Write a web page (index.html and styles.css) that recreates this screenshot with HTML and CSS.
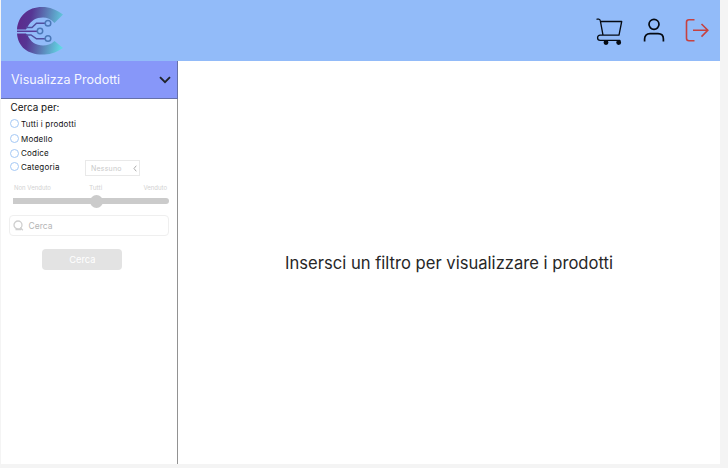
FILE: index.html
```html
<!DOCTYPE html>
<html lang="it">
<head>
<meta charset="utf-8">
<title>Prodotti</title>
<link rel="stylesheet" href="styles.css">
</head>
<body>
<div class="app">
  <header class="header">
    <svg class="logo" width="50" height="52" viewBox="0 0 50 52">
      <defs>
        <linearGradient id="brand" x1="2" y1="24" x2="48" y2="32" gradientUnits="userSpaceOnUse">
          <stop offset="0" stop-color="#5c2a8c"/>
          <stop offset=".25" stop-color="#563594"/>
          <stop offset="1" stop-color="#62d8e4"/>
        </linearGradient>
      </defs>
      <path fill="url(#brand)" d="M2 24.500C3 11 13 2 27 2c8 0 14 2.500 21 7.500L39.500 18C36 14 32 12.500 28 12.500c-7 0-12 3-15.500 9.500L11 24.500ZM2 28.500h9l1.500 1.500c3 7 8.500 10.500 15.500 10.500 4 0 8-1 11.500-4.500l8.500 7C40 48.500 34 49.500 27 49.500 13 49.500 3 42 2 28.500Z"/>
      <g fill="none" stroke="#4b78b8" stroke-width="1.500">
        <path stroke="#563c99" d="M2 26.300h20"/>
        <path stroke="#504f9f" d="M11 22.500h6l4.500-4.200H30M11 30h5l5.500 3.800H30"/>
        <circle cx="25" cy="26" r="2.700"/>
        <circle cx="33" cy="18.300" r="2.800"/>
        <circle cx="33" cy="33.500" r="2.800"/>
      </g>
    </svg>
    <nav class="actions">
      <svg width="27" height="28" viewBox="0 0 27 28" fill="none" stroke="#050a12" stroke-width="1.300" stroke-linejoin="round" stroke-linecap="round">
        <path d="M1 1.200h1.800c1 0 1.400.8 1.600 2L7 17.200M4.500 3.500h21.200L23 17.200H4.200c-3.500 0-3.500 5.200 0 5.200h19.600"/>
        <circle cx="10" cy="24.500" r="1.800" fill="#050a12"/>
        <circle cx="22.700" cy="24.500" r="1.800" fill="#050a12"/>
      </svg>
      <svg class="user" width="22" height="24" viewBox="0 0 22 24" fill="none" stroke="#050a12" stroke-width="1.700">
        <circle cx="11" cy="6.300" r="5"/>
        <path d="M1.600 23.500V21c0-3.500 2-5.300 5.400-5.300h8c3.400 0 5.400 1.800 5.400 5.300v2.500"/>
      </svg>
      <svg class="exit" width="24" height="24" viewBox="0 0 24 24" fill="none" stroke="#c64140" stroke-width="1.600">
        <path d="M9.500 1.700H4C2.300 1.700 1.500 2.500 1.500 4.200v16c0 1.700.8 2.500 2.500 2.500h5.500M8 12.300h15M16.500 6l6.300 6.300-6.300 6.300"/>
      </svg>
    </nav>
  </header>
  <div class="body">
    <aside class="sidebar">
      <div class="panel-title">
        <span>Visualizza Prodotti</span>
        <svg width="12" height="8" viewBox="0 0 12 8" fill="none" stroke="#20232b" stroke-width="1.900"><path d="M1 1.200l5 5 5-5"/></svg>
      </div>
      <form class="filters">
        <div class="legend">Cerca per:</div>
        <div class="option"><i class="dot"></i><span>Tutti i prodotti</span></div>
        <div class="option"><i class="dot"></i><span>Modello</span></div>
        <div class="option code"><i class="dot"></i><span>Codice</span></div>
        <div class="option category"><i class="dot"></i><span>Categoria</span>
          <div class="select"><span>Nessuno</span><svg width="4" height="7" viewBox="0 0 4 7" fill="none" stroke="#aaa" stroke-width="1"><path d="M3.300.7L1 3.500l2.300 2.800"/></svg></div>
        </div>
        <div class="marks"><span>Non Venduto</span><span class="mid">Tutti</span><span class="end">Venduto</span></div>
        <div class="slider"><i class="knob"></i></div>
        <div class="search">
          <svg width="11" height="11" viewBox="0 0 11 11" fill="none" stroke="#cfcfcf" stroke-width="1.300"><circle cx="5" cy="5" r="4"/><path d="M7.300 7.500l2.500 2.700M2.500 9.600h5.500"/></svg>
          <span>Cerca</span>
        </div>
        <div class="submit">Cerca</div>
      </form>
    </aside>
    <main class="content"><p>Insersci un filtro per visualizzare i prodotti</p></main>
  </div>
</div>
</body>
</html>
```
FILE: styles.css
```css
* { box-sizing: border-box; }
body {
  margin: 0;
  background: #f4f4f4;
  font-family: Inter, sans-serif;
  color: #111;
  white-space: nowrap;
}
.app {
  width: 719px;
  height: 464px;
  margin-left: 1px;
  background: #fff;
  display: flex;
  flex-direction: column;
}
.header {
  height: 61px;
  flex: none;
  background: #92bbf9;
  display: flex;
  justify-content: space-between;
  padding: 5px 11px 0 13.500px;
}
svg { display: block; flex: none; }
.actions { display: flex; padding-top: 13px; }
.user { margin-left: 20px; }
.exit { margin-left: 20px; }
.body { flex: 1; display: flex; }
.sidebar {
  width: 177px;
  border-right: 1px solid #929292;
}
.panel-title {
  height: 38px;
  width: 177px;
  background: #8797f9;
  border-bottom: 1px solid #6570a8;
  border-right: 1px solid #6570a8;
  color: #f5f6ff;
  display: flex;
  align-items: center;
  justify-content: space-between;
  padding: 0 6px 0 10px;
  font-size: 12.500px;
}
.filters { padding-left: 9px; }
.legend {
  height: 17px;
  line-height: 17px;
  font-size: 9.900px;
  padding-left: 0.500px;
}
.option {
  height: 15px;
  display: flex;
  align-items: center;
  font-size: 8px;
  letter-spacing: 0.200px;
  position: relative;
}
.code { height: 14px; }
.category { height: 13px; }
.dot {
  width: 9px;
  height: 9px;
  border: 1px solid #a4c8f5;
  border-radius: 50%;
  margin-right: 2px;
}
.select {
  position: absolute;
  left: 75px;
  top: 0;
  width: 55px;
  height: 16px;
  border: 1px solid #e9e9e9;
  color: #c9c9c9;
  font-size: 7px;
  letter-spacing: 0.200px;
  display: flex;
  align-items: center;
  justify-content: space-between;
  padding: 0 2px 0 5px;
}
.marks {
  display: flex;
  width: 153px;
  margin: 10px 0 0 4px;
  height: 10px;
  line-height: 10px;
  font-size: 6px;
  color: #d2d2d2;
}
.marks span:first-child { width: 75px; }
.mid { font-size: 6.500px; }
.end { margin-left: auto; }
.slider {
  width: 156px;
  height: 6px;
  margin: 5px 0 0 3px;
  background: #cbcbcb;
  border-radius: 0 3px 3px 0;
  display: flex;
  align-items: center;
}
.knob {
  width: 13px;
  height: 13px;
  border-radius: 50%;
  background: #cbcbcb;
  margin-left: 76.500px;
}
.search {
  width: 160px;
  height: 21px;
  margin-top: 11px;
  margin-left: -1px;
  border: 1px solid #efefef;
  border-radius: 4px;
  display: flex;
  align-items: center;
  padding-left: 3px;
  gap: 4.500px;
  font-size: 8.500px;
  color: #b5b5b5;
}
.submit {
  width: 80px;
  height: 21px;
  margin: 13px 0 0 32.300px;
  border-radius: 4px;
  background: #e3e3e3;
  color: #fff;
  font-size: 9.300px;
  line-height: 21px;
  text-align: center;
}
.content {
  flex: 1;
  display: flex;
  justify-content: center;
  align-items: center;
}
.content p { margin: 0; font-size: 16.600px; color: #282828; }
```
